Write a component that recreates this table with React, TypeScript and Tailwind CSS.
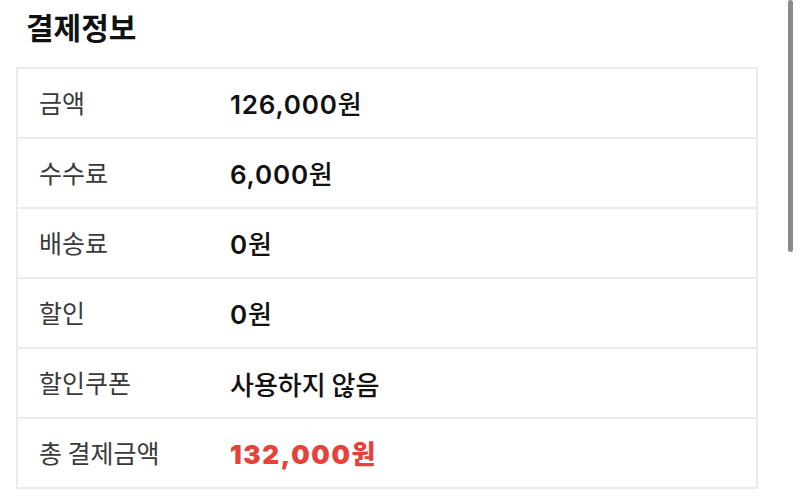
const rows: { label: string; amount?: string; text?: string; total?: boolean }[] = [
  { label: '금액', amount: '126,000' },
  { label: '수수료', amount: '6,000' },
  { label: '배송료', amount: '0' },
  { label: '할인', amount: '0' },
  { label: '할인쿠폰', text: '사용하지 않음' },
  { label: '총 결제금액', amount: '132,000', total: true },
]

export default function App() {
  return (
    <div className="relative h-[502px] w-[800px] overflow-hidden bg-white pl-4 font-['Noto_Sans_CJK_KR','Noto_Sans',sans-serif]">
      <h2 className="pl-[10px] pt-[5px] text-[30px] font-bold leading-[42px] text-[#111]">결제정보</h2>

      <div className="mt-[20px] w-[742px] border-2 border-[#ebebeb]">
        {rows.map((row, i) => (
          <div
            key={row.label}
            className={`flex items-center ${i > 0 ? 'h-[70px] border-t-2 border-[#ebebeb]' : 'h-[68px]'}`}
          >
            <span className="w-[212px] pl-[21px] text-[25px] text-[#3a3a3a]">{row.label}</span>
            {row.text ? (
              <span className="text-[26px] font-medium text-[#111]">{row.text}</span>
            ) : row.total ? (
              <span className="text-[26px] font-black text-[#e5423b]">
                <span className="font-['Inter',sans-serif] tracking-[1.6px]">{row.amount}</span>원
              </span>
            ) : (
              <span className="text-[26px] font-medium text-[#111]">
                <span className="font-['Inter',sans-serif] font-semibold tracking-[0.8px]">{row.amount}</span>원
              </span>
            )}
          </div>
        ))}
      </div>

      <div className="absolute right-[7px] top-0 h-[252px] w-[5px] rounded-full bg-[#8a8a8a]" />
    </div>
  )
}
